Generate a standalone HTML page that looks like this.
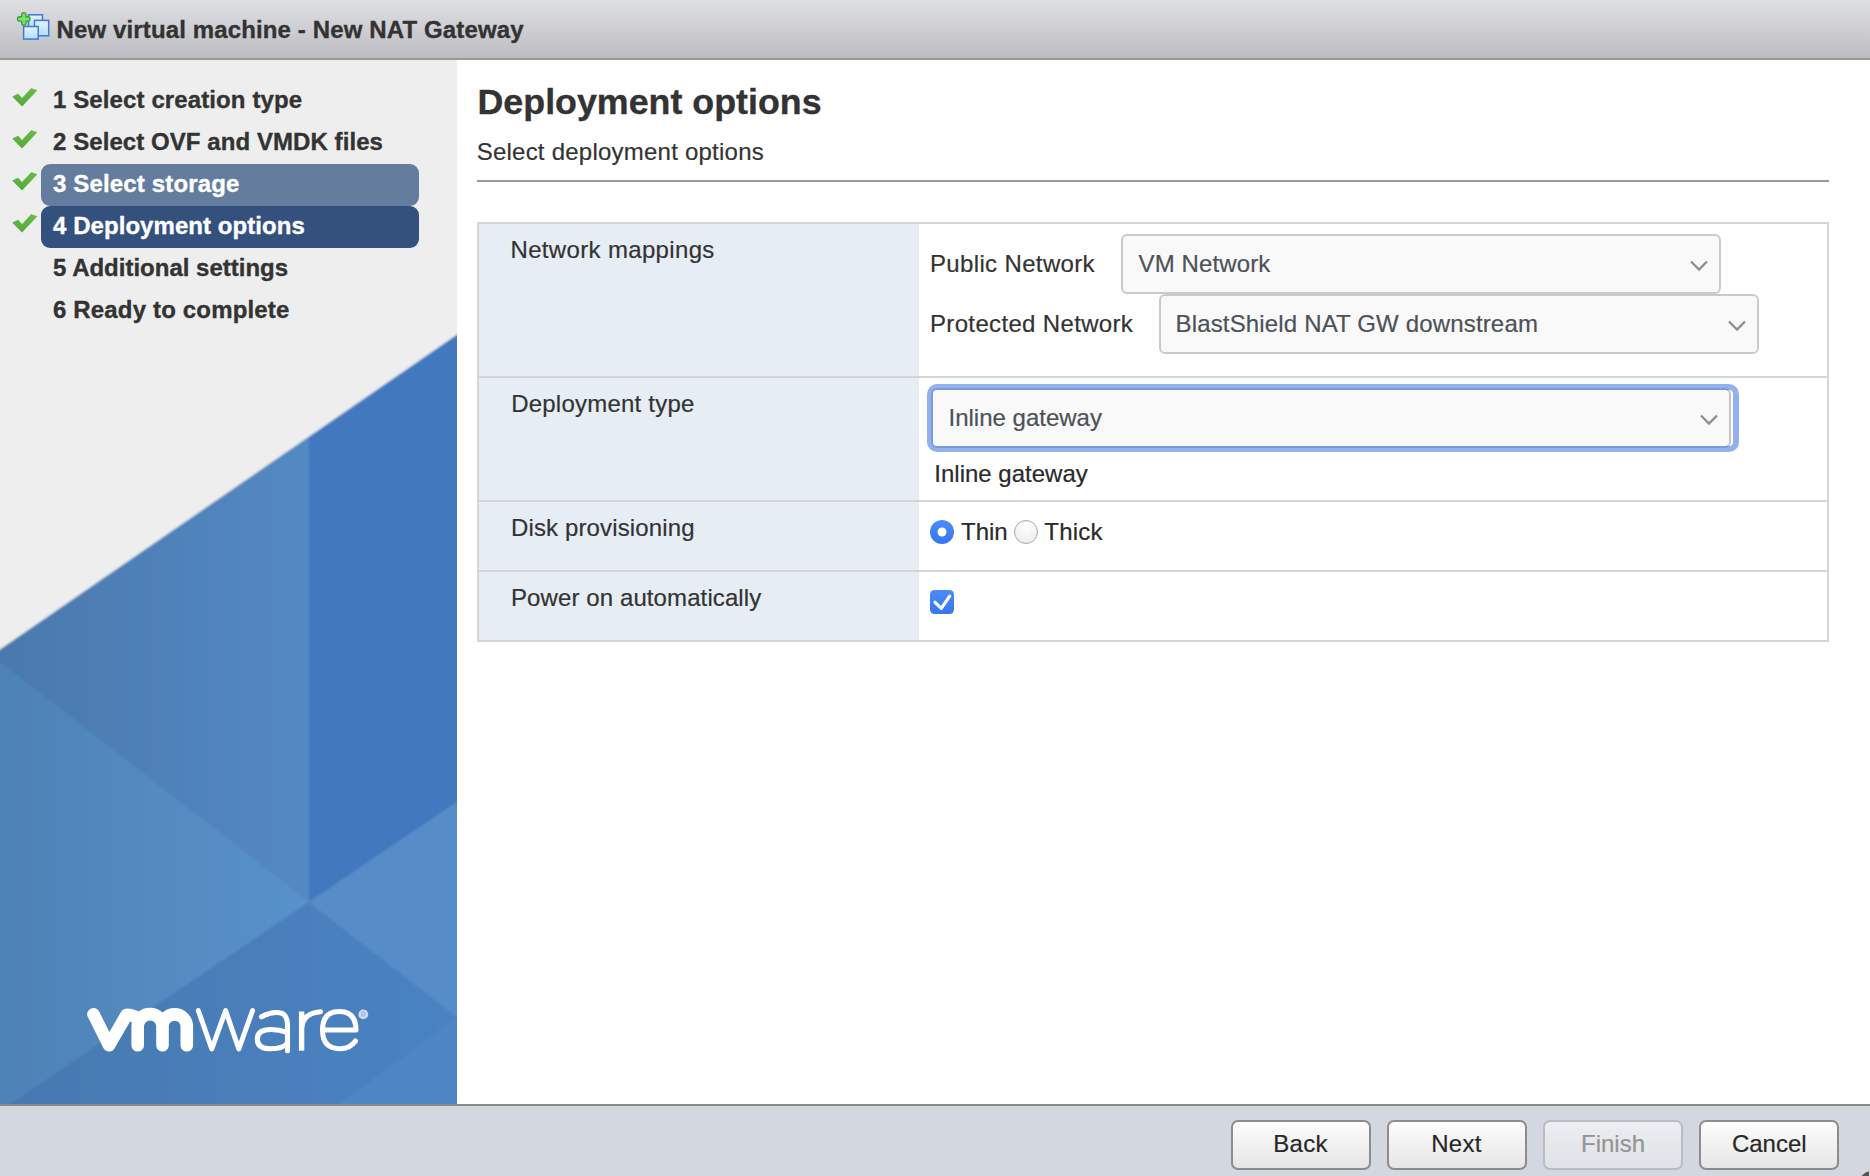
<!DOCTYPE html>
<html><head><meta charset="utf-8">
<style>
*{box-sizing:border-box;margin:0;padding:0}
html,body{width:1870px;height:1176px;overflow:hidden;background:#fff;font-family:"Liberation Sans",sans-serif;color:#333}
.abs{position:absolute;white-space:nowrap}
#title{position:absolute;left:0;top:0;width:1870px;height:60px;background:linear-gradient(#dfe0e3,#bdbdc1);border-bottom:2px solid #9a9a9a}
#side{position:absolute;left:0;top:60px;width:457px;height:1044px;background:#eeeeee;overflow:hidden}
#main{position:absolute;left:457px;top:60px;width:1413px;height:1044px;background:#fff}
#foot{position:absolute;left:0;top:1104px;width:1870px;height:72px;background:#d2d7e0;border-top:2px solid #8a8a8a}
.t24{font-size:24px;line-height:24px}
.b{font-weight:bold;-webkit-text-stroke:0.35px currentColor}
.step{position:absolute;left:53px;font-size:24px;line-height:24px;font-weight:bold;color:#333;white-space:nowrap;-webkit-text-stroke:0.35px currentColor}
.hl{position:absolute;left:41px;width:378px;height:42px;border-radius:9px}
.btn{position:absolute;top:1120px;width:140px;height:50px;border:2px solid #8c8c8c;border-radius:7px;background:linear-gradient(#fdfdfd,#e6e6e6);font-size:24px;line-height:44px;text-align:center;color:#282828;letter-spacing:0.3px;text-indent:-1px;-webkit-text-stroke:0.2px currentColor}
.sel{position:absolute;background:#f9f9f9;border:2px solid #cacaca;border-radius:6px}
.lbl{position:absolute;font-size:24px;line-height:24px;color:#333;white-space:nowrap;-webkit-text-stroke:0.2px currentColor}
</style></head><body>
<div id="title">
  <svg class="abs" style="left:15px;top:10px" width="40" height="34" viewBox="0 0 40 34">
    <defs><linearGradient id="gic" x1="0" x2="0" y1="0" y2="1"><stop offset="0" stop-color="#e4f4ff"/><stop offset="1" stop-color="#b4dcf8"/></linearGradient></defs>
    <rect x="13.5" y="4.8" width="14" height="13.6" fill="url(#gic)" stroke="#3d7bd4" stroke-width="1.5"/>
    <rect x="19.5" y="10.4" width="14.2" height="15.4" fill="url(#gic)" stroke="#3d7bd4" stroke-width="1.5"/>
    <rect x="8.6" y="16.5" width="14.6" height="12.6" fill="url(#gic)" stroke="#3d7bd4" stroke-width="1.5"/>
    <path d="M8.8 4.7v8.4M4.6 8.9h8.4" stroke="#3f9e3a" stroke-width="5.6" stroke-linecap="round"/>
    <path d="M8.8 4.7v8.4M4.6 8.9h8.4" stroke="#7be06c" stroke-width="3" stroke-linecap="round"/>
  </svg>
  <div class="abs b" style="left:56.5px;top:17.5px;font-size:24px;line-height:24px;color:#333;letter-spacing:0.13px">New virtual machine - New NAT Gateway</div>
</div>

<div id="side">
  <svg class="abs" style="left:0;top:0" width="457" height="1044" viewBox="0 60 457 1044">
    <defs>
      <linearGradient id="g2" gradientUnits="userSpaceOnUse" x1="0" x2="308.8" y1="0" y2="0"><stop offset="0" stop-color="#4a79ad"/><stop offset="1" stop-color="#5489c3"/></linearGradient>
      <linearGradient id="g3" gradientUnits="userSpaceOnUse" x1="0" x2="308.8" y1="0" y2="0"><stop offset="0" stop-color="#4e82b6"/><stop offset="1" stop-color="#5892ca"/></linearGradient>
      <linearGradient id="g5" gradientUnits="userSpaceOnUse" x1="0" x2="457" y1="0" y2="0"><stop offset="0" stop-color="#4679b0"/><stop offset="1" stop-color="#4b83c3"/></linearGradient>
    </defs>
    <filter id="bl" x="-5%" y="-5%" width="110%" height="110%"><feGaussianBlur stdDeviation="0.9"/></filter>
    <g filter="url(#bl)">
    <rect x="-10" y="50" width="480" height="1070" fill="url(#g3)"/>
    <polygon points="308.8,902 470,1027 470,1120 -10,1120 -10,1117.5" fill="url(#g5)"/>
    <polygon points="470,1007.4 470,1120 317.2,1120" fill="#4d86c2"/>
    <polygon points="308.8,902 470,793 470,1027" fill="#568cc8"/>
    <polygon points="-10,649.5 0,649.5 308.8,437 308.8,902 0,662 -10,662" fill="url(#g2)"/>
    <polygon points="308.8,437 470,325.5 470,793 308.8,902" fill="#4278bd"/>
    <polygon points="-10,50 470,50 470,325.5 -10,656.4" fill="#eeeeee"/>
    </g>
    <g fill="none" stroke="#fff" stroke-linecap="round" stroke-linejoin="round">
      <path d="M93.5 1014.3 L109 1045.3 L126.5 1015 Q129 1013.6 138 1018" stroke-width="12.6"/>
      <path d="M137.7 1045.3 V1026.5 A12.4 12.4 0 0 1 162.5 1026.5 V1045.3 M162.5 1026.5 A12.15 12.15 0 0 1 186.8 1026.5 V1045.3" stroke-width="12.6"/>
      <path d="M198.3 1010.5 L211.8 1049 L225.6 1010.5 L238.8 1049 L252.6 1010.5" stroke-width="5"/>
      <path d="M261.5 1016.8 Q273 1010.5 282.5 1013.5 Q287.5 1016.5 287.5 1025 V1050.7" stroke-width="5.1"/><path d="M287.5 1032.5 Q279 1029.5 271 1029.5 Q257.3 1029.5 257.3 1039.2 Q257.3 1048.8 271 1048.8 Q283 1048.8 287.5 1043" stroke-width="5.1"/>
      <path d="M301.6 1050.7 V1011.5" stroke-width="5.4" stroke-linecap="butt"/><path d="M301.8 1027 Q303 1013.5 320.5 1011.8" stroke-width="5"/>
      <path d="M324 1030.1 H356 Q356 1011.5 339.3 1011.5 Q322.5 1011.5 322.5 1030.1 Q322.5 1048.8 340 1048.8 Q350 1048.8 355.5 1041" stroke-width="5"/>
      <circle cx="363.3" cy="1014.4" r="4.9" fill="#fff" fill-opacity="0.72" stroke="none"/><path d="M361.9 1016.9 V1012 H363.9 Q365.2 1012 365.2 1013.3 Q365.2 1014.6 363.9 1014.6 H361.9 M363.6 1014.6 L365.2 1016.9" stroke="#8eaede" stroke-width="0.8" stroke-linecap="butt"/>
    </g>
  </svg>
  <div class="hl" style="top:103.7px;background:#647d9f"></div>
  <div class="hl" style="top:145.8px;background:#34517e"></div>
</div>
<!-- steps (page coords) -->
<svg class="abs" style="left:0;top:0" width="60" height="260">
  <defs><linearGradient id="gck" x1="0" x2="0" y1="0" y2="1"><stop offset="0" stop-color="#66bd46"/><stop offset="1" stop-color="#55a838"/></linearGradient></defs>
  <g fill="url(#gck)" stroke="#58ad3b" stroke-width="0.6" stroke-linejoin="round"><polygon points="12.7,96.7 18.1,94.0 22,98.4 31.2,88.6 36.8,90.4 22,106.2"/><polygon points="12.7,138.7 18.1,136.0 22,140.4 31.2,130.6 36.8,132.4 22,148.2"/><polygon points="12.7,180.7 18.1,178.0 22,182.4 31.2,172.6 36.8,174.4 22,190.2"/><polygon points="12.7,222.7 18.1,220.0 22,224.4 31.2,214.6 36.8,216.4 22,232.2"/></g>
</svg>
<div class="step" style="top:87.5px;letter-spacing:0.11px">1 Select creation type</div>
<div class="step" style="top:129.5px;letter-spacing:0.07px">2 Select OVF and VMDK files</div>
<div class="step" style="top:171.5px;color:#fff;letter-spacing:0.15px">3 Select storage</div>
<div class="step" style="top:213.5px;color:#fff;letter-spacing:0.06px">4 Deployment options</div>
<div class="step" style="top:255.5px">5 Additional settings</div>
<div class="step" style="top:297.5px;letter-spacing:0.16px">6 Ready to complete</div>

<div id="main"></div>
<div class="abs b" style="left:477.5px;top:84px;font-size:35.8px;line-height:36px;color:#333">Deployment options</div>
<div class="lbl" style="left:476.7px;top:140.2px;letter-spacing:0.23px">Select deployment options</div>
<div class="abs" style="left:477px;top:179.5px;width:1352px;height:2px;background:#999"></div>

<!-- table -->
<div class="abs" style="left:477px;top:222px;width:1352px;height:420px;border:2px solid #d5d5d5;background:#fff"></div>
<div class="abs" style="left:479px;top:224px;width:440px;height:416px;background:#e6edf5"></div>
<div class="abs" style="left:479px;top:376px;width:1348px;height:2px;background:#d5d5d5"></div>
<div class="abs" style="left:479px;top:500px;width:1348px;height:2px;background:#d5d5d5"></div>
<div class="abs" style="left:479px;top:570px;width:1348px;height:2px;background:#d5d5d5"></div>

<div class="lbl" style="left:510.5px;top:237.7px;letter-spacing:0.34px">Network mappings</div>
<div class="lbl" style="left:511.2px;top:391.6px;letter-spacing:0.22px">Deployment type</div>
<div class="lbl" style="left:511px;top:516.4px;letter-spacing:0.13px">Disk provisioning</div>
<div class="lbl" style="left:511px;top:585.5px;letter-spacing:0.1px">Power on automatically</div>

<div class="lbl" style="left:930px;top:251.7px;letter-spacing:0.35px">Public Network</div>
<div class="lbl" style="left:930px;top:311.6px;letter-spacing:0.34px">Protected Network</div>

<div class="sel" style="left:1121px;top:234px;width:600px;height:60px"></div>
<div class="lbl" style="left:1138.5px;top:251.7px;color:#4b5258;letter-spacing:0.13px">VM Network</div>
<div class="sel" style="left:1159px;top:294px;width:600px;height:60px"></div>
<div class="lbl" style="left:1175.5px;top:311.6px;color:#4b5258;letter-spacing:0.16px">BlastShield NAT GW downstream</div>

<div class="abs" style="left:927px;top:384px;width:812px;height:68px;border-radius:10px;background:#93b1ee"></div>
<div class="abs" style="left:1725px;top:390px;width:8px;height:56px;border-radius:0 4px 4px 0;background:#fff"></div>
<div class="abs" style="left:931px;top:388px;width:800px;height:60px;border:2px solid #7a9bd9;border-right-color:#c4c4c4;border-radius:6px;background:#f9f9f9"></div>
<div class="lbl" style="left:948.5px;top:406.1px;color:#4b5258">Inline gateway</div>
<div class="lbl" style="left:934.3px;top:461.6px;color:#2a2a2a">Inline gateway</div>

<svg class="abs" style="left:0;top:0" width="1870" height="700">
  <g fill="none" stroke="#8e8e8e" stroke-width="2.3">
    <path d="M1691 261.5 L1699 269.5 L1707 261.5"/>
    <path d="M1729 321.5 L1737 329.5 L1745 321.5"/>
    <path d="M1701 415.5 L1709 423.5 L1717 415.5"/>
  </g>
  <defs>
    <linearGradient id="gb" x1="0" x2="0" y1="0" y2="1"><stop offset="0" stop-color="#4b8cf5"/><stop offset="1" stop-color="#3676ef"/></linearGradient>
    <radialGradient id="gw" cx="0.5" cy="0.3" r="0.7"><stop offset="0" stop-color="#ffffff"/><stop offset="1" stop-color="#ececec"/></radialGradient>
  </defs>
  <circle cx="942" cy="532" r="12" fill="url(#gb)"/>
  <circle cx="942" cy="532" r="4.5" fill="#fff"/>
  <circle cx="1026" cy="532" r="11.5" fill="url(#gw)" stroke="#a8a8a8" stroke-width="1"/>
  <rect x="930" y="590" width="24" height="24" rx="4.5" fill="url(#gb)"/>
  <path d="M935 602.3 L941.3 608.3 L949.7 596.2" fill="none" stroke="#fff" stroke-width="3.2" stroke-linecap="round" stroke-linejoin="round"/>
</svg>
<div class="lbl" style="left:961px;top:519.9px;color:#2a2a2a">Thin</div>
<div class="lbl" style="left:1044.3px;top:519.9px;color:#2a2a2a;letter-spacing:0.2px">Thick</div>

<div id="foot"></div>
<div class="btn" style="left:1231px">Back</div>
<div class="btn" style="left:1387px">Next</div>
<div class="btn" style="left:1543px;border-color:#b9bcc2;background:linear-gradient(#eceef1,#dfe2e6);color:#949494;letter-spacing:0;text-indent:0">Finish</div>
<div class="btn" style="left:1699px;letter-spacing:0;text-indent:0.5px">Cancel</div>
<svg class="abs" style="left:1855px;top:1162px" width="15" height="14"><path d="M6.5 14 Q10 10 14 9.3 L14 14 Z" fill="#555"/></svg>
</body></html>
